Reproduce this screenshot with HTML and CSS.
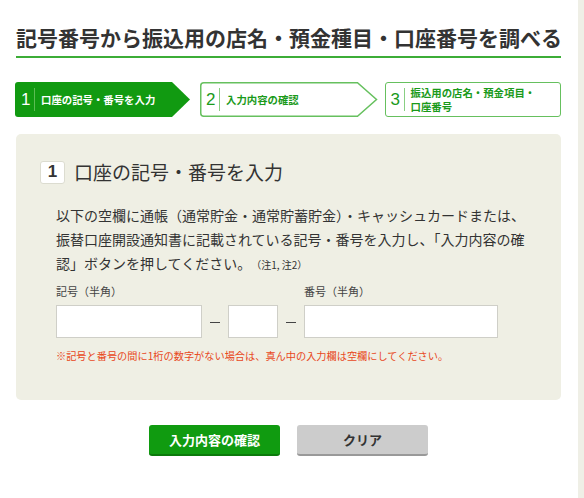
FILE: index.html
```html
<!DOCTYPE html>
<html lang="ja">
<head>
<meta charset="utf-8">
<title>記号番号から振込用の店名・預金種目・口座番号を調べる</title>
<link rel="stylesheet" href="styles.css">
</head>
<body>
<div class="page">
  <main class="main">
    <h1 class="title">記号番号から振込用の店名・預金種目・口座番号を調べる</h1>

    <ol class="steps">
      <li class="step step-current">
        <svg class="step-bg" viewBox="0 0 175 35" preserveAspectRatio="none"><path d="M3 0 H157 L175 17.5 L157 35 H3 Q0 35 0 32 V3 Q0 0 3 0 Z" fill="#119a11"/></svg>
        <span class="step-num">1</span><span class="step-div"></span><span class="step-text">口座の記号・番号を入力</span>
      </li>
      <li class="step step-next">
        <svg class="step-bg" viewBox="0 0 178 35" preserveAspectRatio="none"><path d="M3.75 0.75 H157.5 L176.5 17.5 L157.5 34.25 H3.75 Q0.75 34.25 0.75 31.25 V3.75 Q0.75 0.75 3.75 0.75 Z" fill="#fff" stroke="#66c05e" stroke-width="1.5"/></svg>
        <span class="step-num">2</span><span class="step-div"></span><span class="step-text">入力内容の確認</span>
      </li>
      <li class="step step-last">
        <span class="step-num">3</span><span class="step-div"></span><span class="step-text">振込用の店名・預金項目・<br>口座番号</span>
      </li>
    </ol>

    <section class="panel">
      <h2 class="panel-head"><span class="badge">1</span><span class="panel-title">口座の記号・番号を入力</span></h2>
      <p class="lead">以下の空欄に通帳（通常貯金・通常貯蓄貯金）・キャッシュカードまたは、<br>振替口座開設通知書に記載されている記号・番号を入力し、「入力内容の確認」ボタンを押してください。<small class="notes">（注1, 注2）</small></p>

      <div class="fields">
        <div class="field">
          <label class="label" for="kigo">記号（半角）</label>
          <div class="inputs">
            <input class="input input-kigo" id="kigo" type="text">
            <span class="dash"></span>
            <input class="input input-mid" type="text">
            <span class="dash"></span>
          </div>
        </div>
        <div class="field">
          <label class="label" for="bango">番号（半角）</label>
          <div class="inputs">
            <input class="input input-bango" id="bango" type="text">
          </div>
        </div>
      </div>
      <p class="warn">※記号と番号の間に1桁の数字がない場合は、真ん中の入力欄は空欄にしてください。</p>
    </section>

    <div class="actions">
      <button class="btn btn-primary" type="button">入力内容の確認</button>
      <button class="btn btn-clear" type="button">クリア</button>
    </div>
  </main>
  <div class="side"></div>
</div>
</body>
</html>
```

FILE: styles.css
```css
* { box-sizing: border-box; }

html, body {
  margin: 0;
  padding: 0;
  background: #fff;
}

body {
  font-family: "Noto Sans CJK JP", "Noto Sans", "Liberation Sans", sans-serif;
  color: #333;
}

.page {
  display: flex;
  width: 584px;
  height: 498px;
  overflow: hidden;
}

.main {
  width: 578px;
  padding: 22px 0 0 16px;
}

.side {
  flex: 1;
  background: #efefe6;
}

.title {
  width: 545px;
  margin: 0;
  padding: 0 0 4px 0;
  font-size: 21px;
  line-height: 30px;
  font-weight: 700;
  color: #333;
  white-space: nowrap;
  border-bottom: 2px solid #3cad37;
}

/* steps */
.steps {
  list-style: none;
  margin: 24px 0 0 -1px;
  padding: 0;
  display: flex;
  height: 35px;
}

.step {
  position: relative;
  display: flex;
  align-items: center;
  height: 35px;
  padding-left: 6px;
  color: #1a9a1a;
}

.step-current { width: 175px; color: #fff; }
.step-next { width: 178px; margin-left: 10px; }
.step-last {
  width: 176px;
  margin-left: 7px;
  border: 1.5px solid #66c05e;
  border-radius: 3px;
  padding-left: 4.5px;
  background: #fff;
}

.step-bg {
  position: absolute;
  left: 0;
  top: 0;
  width: 100%;
  height: 100%;
}

.step-num,
.step-div,
.step-text { position: relative; }

.step-num {
  width: 10px;
  font-family: "Liberation Sans", Arial, sans-serif;
  font-size: 17px;
  line-height: 20px;
}

.step-div {
  width: 1px;
  height: 23px;
  margin: 0 6px 0 3px;
  background: #89cf83;
}

.step-current .step-div { background: #5cbc53; }

.step-text {
  font-size: 10.4px;
  line-height: 13.5px;
  font-weight: 700;
}

/* panel */
.panel {
  width: 545px;
  margin-top: 17px;
  padding: 26px 24px 37px 24px;
  background: #efefe4;
  border-radius: 5px;
}

.panel-head {
  display: flex;
  align-items: center;
  margin: 0;
  font-weight: 400;
}

.badge {
  display: flex;
  align-items: center;
  justify-content: center;
  width: 25px;
  height: 23px;
  background: #fff;
  border: 1px solid #dcdcd0;
  border-radius: 3px;
  font-family: "Liberation Sans", Arial, sans-serif;
  font-weight: 700;
  font-size: 17px;
  color: #333;
}

.panel-title {
  margin-left: 9px;
  font-size: 19px;
  line-height: 24px;
  color: #333;
}

.lead {
  width: 484px;
  margin: 19px 0 0 16px;
  font-size: 14px;
  line-height: 24px;
  color: #333;
}

.notes {
  font-size: 10px;
  line-height: 14px;
  margin-left: 5px;
}

.fields {
  display: flex;
  margin: 8px 0 0 16px;
}

.label {
  display: block;
  font-size: 11px;
  line-height: 16px;
  color: #444;
}

.inputs {
  display: flex;
  align-items: center;
  margin-top: 6px;
}

.input {
  height: 33px;
  margin: 0;
  padding: 0;
  background: #fff;
  border: 1.5px solid #cfcfc8;
  border-radius: 0;
}

.input-kigo { width: 146px; }
.input-mid { width: 50px; }
.input-bango { width: 194px; }

.dash {
  display: block;
  width: 10px;
  height: 1.5px;
  margin: 2px 8px 0 8px;
  background: #444;
}

.warn {
  margin: 11px 0 0 16px;
  font-size: 10.2px;
  line-height: 14px;
  color: #e8481c;
}

/* actions */
.actions {
  display: flex;
  justify-content: center;
  gap: 17px;
  width: 545px;
  margin-top: 25px;
}

.btn {
  width: 131px;
  height: 31px;
  margin: 0;
  padding: 0;
  border: none;
  border-radius: 3px;
  font-family: "Noto Sans CJK JP", "Noto Sans", sans-serif;
  font-size: 13px;
  font-weight: 700;
  cursor: pointer;
}

.btn-primary {
  background: #109b10;
  color: #fff;
  border-bottom: 2px solid #0b7a0b;
}

.btn-clear {
  background: #cccccc;
  color: #333;
  border-bottom: 2px solid #999;
}
```
